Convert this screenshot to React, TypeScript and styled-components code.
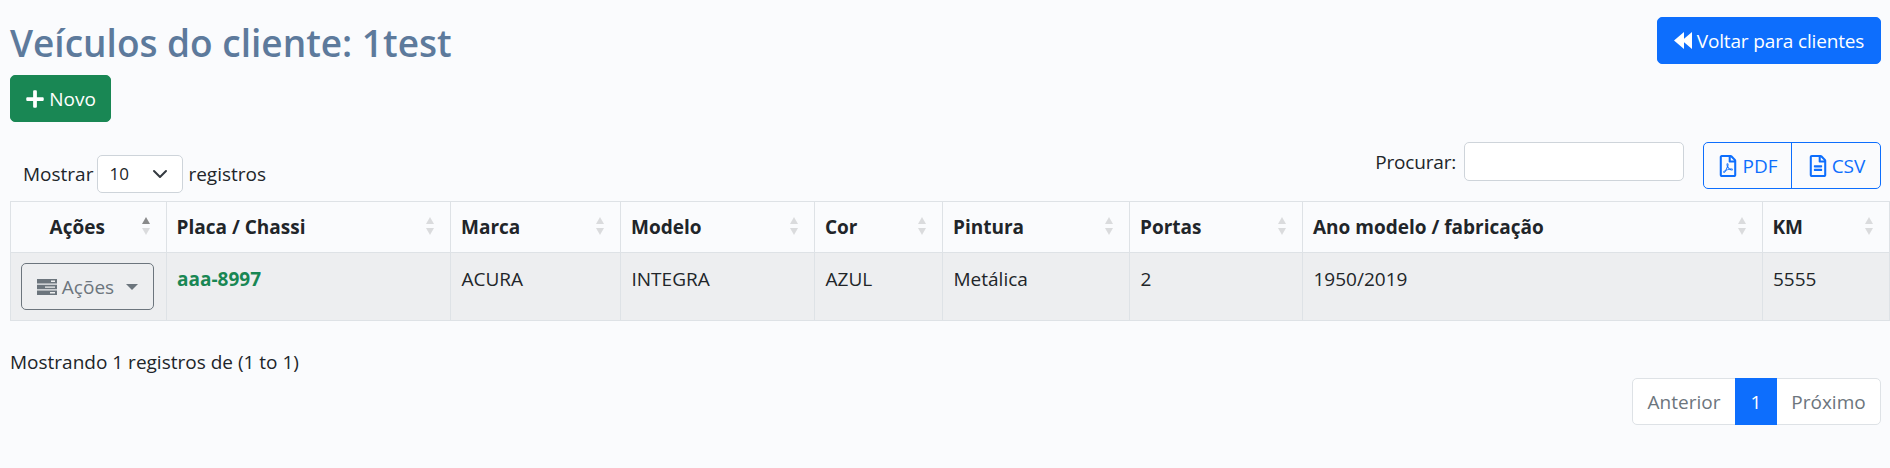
import React from "react";
import styled, { createGlobalStyle } from "styled-components";
import { FaPlus, FaRegFileAlt, FaRegFilePdf } from "react-icons/fa";

const GlobalStyle = createGlobalStyle`
    html, body {
        margin: 0;
        padding: 0;
        background: #fafbfd;
        color: #212529;
        font-family: "Open Sans", "Noto Sans", sans-serif;
        font-size: 19px;
        line-height: 30px;
    }
    svg {
        font-size: 20px;
    }
`;

const Page = styled.main`
    width: 1890px;
    height: 468px;
    padding: 17px 9px 0 10px;
    box-sizing: border-box;
    overflow: hidden;
`;

const TitleRow = styled.header`
    display: flex;
    justify-content: space-between;
    align-items: flex-start;
    height: 58px;
`;

const Title = styled.h2`
    margin: 2px 0 0;
    font-size: 37px;
    line-height: 48px;
    font-weight: 600;
    color: #5d7a9c;
`;

const Button = styled.button<{ $bg: string; $width: number }>`
    display: inline-flex;
    align-items: center;
    justify-content: center;
    gap: 4px;
    width: ${(p) => p.$width}px;
    height: 47px;
    padding: 0;
    border: 1px solid ${(p) => p.$bg};
    border-radius: 5px;
    background: ${(p) => p.$bg};
    color: #fff;
    font: inherit;
`;

const BackButton = styled(Button)`
    gap: 5px;
    letter-spacing: -0.15px;
`;

const Controls = styled.section`
    display: flex;
    justify-content: space-between;
    align-items: flex-start;
    height: 59px;
    margin-top: 20px;
`;

const LengthLabel = styled.label`
    display: flex;
    align-items: center;
    gap: 5px;
    height: 38px;
    margin: 13px 0 0 13px;
`;

const SelectBox = styled.div`
    display: flex;
    align-items: center;
    justify-content: space-between;
    width: 86px;
    height: 38px;
    margin-left: -1px;
    padding: 0 14px 0 11px;
    box-sizing: border-box;
    background: #fff;
    border: 1px solid #ced4da;
    border-radius: 5px;
    font-size: 17px;
`;

const SearchGroup = styled.div`
    display: flex;
    align-items: flex-start;
`;

const SearchLabel = styled.label`
    display: flex;
    align-items: center;
    gap: 8px;
    height: 39px;
    margin-right: 19px;
    letter-spacing: -0.2px;
`;

const SearchInput = styled.input`
    width: 220px;
    height: 39px;
    padding: 0;
    box-sizing: border-box;
    background: #fff;
    border: 1px solid #ced4da;
    border-radius: 5px;
`;

const ExportGroup = styled.div`
    display: flex;
    height: 47px;
    border: 1px solid #0d6efd;
    border-radius: 5px;
    box-sizing: border-box;
`;

const ExportButton = styled.button<{ $first?: boolean; $width: number }>`
    display: flex;
    align-items: center;
    justify-content: center;
    gap: 3px;
    width: ${(p) => p.$width}px;
    padding: 0;
    background: transparent;
    border: 0;
    border-left: ${(p) => (p.$first ? "0" : "1px solid #0d6efd")};
    color: #0d6efd;
    font: inherit;

    svg {
        font-size: 22px;
    }
`;

const Table = styled.table`
    width: 1879px;
    table-layout: fixed;
    border-collapse: collapse;
`;

const HeadCell = styled.th`
    height: 51px;
    padding: 0 16px 0 10px;
    box-sizing: border-box;
    border: 1px solid #dee2e6;
    font-weight: 700;
    text-align: left;
`;

const HeadInner = styled.div`
    display: flex;
    align-items: center;
    justify-content: space-between;
`;

const HeadLabel = styled.span<{ $center?: boolean }>`
    flex: 1;
    margin-right: 8px;
    text-align: ${(p) => (p.$center ? "center" : "left")};
`;

const SortArrows = styled.span`
    display: flex;
    flex-direction: column;
    gap: 4px;
    margin-top: -2px;
`;

const SortUp = styled.span<{ $active?: boolean }>`
    border-bottom: 7px solid ${(p) => (p.$active ? "rgba(0, 0, 0, 0.45)" : "rgba(0, 0, 0, 0.125)")};
    border-left: 4px solid transparent;
    border-right: 4px solid transparent;
`;

const SortDown = styled.span`
    border-top: 7px solid rgba(0, 0, 0, 0.125);
    border-left: 4px solid transparent;
    border-right: 4px solid transparent;
`;

const Row = styled.tr`
    background: rgba(0, 0, 0, 0.05);
`;

const Cell = styled.td`
    height: 68px;
    padding: 11px 10.5px;
    box-sizing: border-box;
    border: 1px solid #dee2e6;
    vertical-align: top;
`;

const ActionsCell = styled(Cell)`
    padding: 10px 10px 0 10px;
`;

const ActionsButton = styled.button`
    display: flex;
    align-items: center;
    justify-content: center;
    gap: 5px;
    width: 133px;
    height: 47px;
    padding: 0;
    background: transparent;
    border: 1px solid #6c757d;
    border-radius: 5px;
    color: #6c757d;
    font: inherit;
`;

const Caret = styled.span`
    margin-left: 7px;
    border-top: 6px solid #6c757d;
    border-left: 6px solid transparent;
    border-right: 6px solid transparent;
`;

const Plate = styled.a`
    color: #198754;
    font-weight: 700;
`;

const Info = styled.div`
    margin-top: 26px;
`;

const PaginationRow = styled.nav`
    display: flex;
    justify-content: flex-end;
    margin-top: 1px;
`;

const Pagination = styled.div`
    display: flex;
    height: 47px;
    background: #fff;
    border: 1px solid #dee2e6;
    border-radius: 5px;
    box-sizing: border-box;
`;

const PageLink = styled.span<{ $active?: boolean; $width: number }>`
    display: flex;
    align-items: center;
    justify-content: center;
    width: ${(p) => p.$width}px;
    margin: ${(p) => (p.$active ? "-1px 0" : "0")};
    background: ${(p) => (p.$active ? "#0d6efd" : "transparent")};
    color: ${(p) => (p.$active ? "#fff" : "#6c757d")};
`;

const BackwardIcon = () => (
    <svg width="18" height="17" viewBox="0 0 18 17" fill="currentColor">
        <path d="M0 8.5 10 0v17zM8 8.5 18 0v17z" />
    </svg>
);

const ServerIcon = () => (
    <svg width="20" height="16" viewBox="0 0 20 16">
        <path fill="#6c757d" d="M0 0h20v4.5H0zM0 5.8h20v4.5H0zM0 11.5h20V16H0z" />
        <path fill="#eeeff0" d="M14 1.6h4v1.4h-4zM8 7.4h10v1.4H8zM13 13.1h5v1.4h-5z" />
    </svg>
);

const columns = [
    { label: "Ações", width: 155.5, center: true, active: true },
    { label: "Placa / Chassi", width: 284.5 },
    { label: "Marca", width: 170 },
    { label: "Modelo", width: 194 },
    { label: "Cor", width: 128 },
    { label: "Pintura", width: 187 },
    { label: "Portas", width: 173 },
    { label: "Ano modelo / fabricação", width: 459.5 },
    { label: "KM", width: 127 },
];

const values = ["ACURA", "INTEGRA", "AZUL", "Metálica", "2", "1950/2019", "5555"];

export default function App() {
    return (
        <Page>
            <GlobalStyle />
            <TitleRow>
                <Title>Veículos do cliente: 1test</Title>
                <BackButton $bg="#0d6efd" $width={224}>
                    <BackwardIcon /> Voltar para clientes
                </BackButton>
            </TitleRow>
            <Button $bg="#198754" $width={101}>
                <FaPlus /> Novo
            </Button>
            <Controls>
                <LengthLabel>
                    Mostrar
                    <SelectBox>
                        10
                        <svg width="16" height="16" viewBox="0 0 16 16" fill="none" stroke="#343a40" strokeWidth="2" strokeLinecap="round" strokeLinejoin="round">
                            <path d="m2 5 6 6 6-6" />
                        </svg>
                    </SelectBox>
                    registros
                </LengthLabel>
                <SearchGroup>
                    <SearchLabel>
                        Procurar:
                        <SearchInput />
                    </SearchLabel>
                    <ExportGroup>
                        <ExportButton $first $width={87}>
                            <FaRegFilePdf /> PDF
                        </ExportButton>
                        <ExportButton $width={89}>
                            <FaRegFileAlt /> CSV
                        </ExportButton>
                    </ExportGroup>
                </SearchGroup>
            </Controls>
            <Table>
                <colgroup>
                    {columns.map((c) => (
                        <col key={c.label} width={c.width} />
                    ))}
                </colgroup>
                <thead>
                    <tr>
                        {columns.map((c) => (
                            <HeadCell key={c.label}>
                                <HeadInner>
                                    <HeadLabel $center={c.center}>{c.label}</HeadLabel>
                                    <SortArrows>
                                        <SortUp $active={c.active} />
                                        <SortDown />
                                    </SortArrows>
                                </HeadInner>
                            </HeadCell>
                        ))}
                    </tr>
                </thead>
                <tbody>
                    <Row>
                        <ActionsCell>
                            <ActionsButton>
                                <ServerIcon /> Ações <Caret />
                            </ActionsButton>
                        </ActionsCell>
                        <Cell>
                            <Plate>aaa-8997</Plate>
                        </Cell>
                        {values.map((v) => (
                            <Cell key={v}>{v}</Cell>
                        ))}
                    </Row>
                </tbody>
            </Table>
            <Info>Mostrando 1 registros de (1 to 1)</Info>
            <PaginationRow>
                <Pagination>
                    <PageLink $width={102}>Anterior</PageLink>
                    <PageLink $active $width={42}>
                        1
                    </PageLink>
                    <PageLink $width={103}>Próximo</PageLink>
                </Pagination>
            </PaginationRow>
        </Page>
    );
}
